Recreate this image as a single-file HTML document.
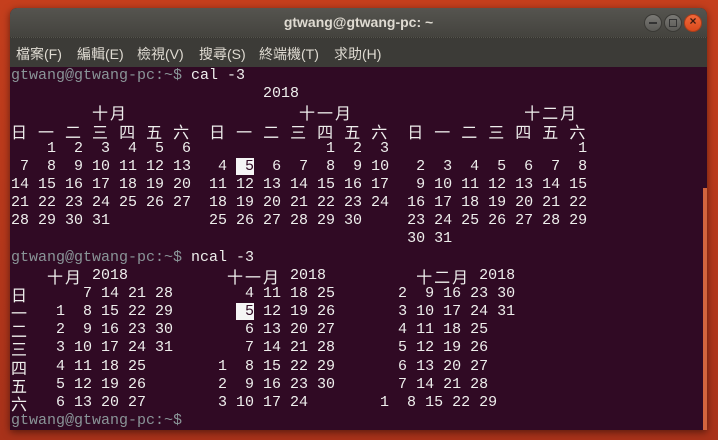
<!DOCTYPE html>
<html><head><meta charset="utf-8"><style>
html,body{margin:0;padding:0;width:718px;height:440px;overflow:hidden;background:linear-gradient(180deg,#c53f1d,#a8321a);}
.win{position:absolute;left:10px;top:8px;width:697px;height:422px;background:#300a24;border-radius:7px 7px 0 0;overflow:hidden;box-shadow:0 2px 8px rgba(0,0,0,.5);}
.tb{position:absolute;left:0;top:0;width:100%;height:29px;background:linear-gradient(180deg,#55544f,#44433e);border-bottom:1px dotted #37362f;}
.title{position:absolute;left:0;width:100%;top:6px;text-align:center;color:#dfdbd2;font:bold 14px "Liberation Sans",sans-serif;}
.mb{position:absolute;left:0;top:30px;width:100%;height:29px;background:#3c3b37;}
.mi{position:absolute;top:6px;color:#dfdbd2;font:14px "Liberation Sans","Noto Sans CJK TC",sans-serif;}
.btn{position:absolute;top:6px;width:16px;height:16px;border-radius:50%;background:linear-gradient(#7a7975,#5a5955);border:1px solid #3a3935;}
.term{position:absolute;left:1px;top:59px;}
.l{position:absolute;left:0;white-space:pre;font:15px "Liberation Mono",monospace;color:#eeeeec;height:18px;line-height:18px;}
.p{color:#8a9598;}
.w{display:inline-block;width:18px;font:16px "Noto Sans CJK TC",sans-serif;vertical-align:top;line-height:18px;height:18px;}
.h{background:#f5f5f5;color:#300a24;}
</style></head><body>
<div class="win">
<div class="tb"><div class="title">gtwang@gtwang-pc: ~</div>
<div class="btn" style="left:634px"><div style="position:absolute;left:4px;top:7px;width:8px;height:2px;background:#333"></div></div>
<div class="btn" style="left:654px"><div style="position:absolute;left:4px;top:4px;width:6px;height:6px;border:1px solid #333"></div></div>
<div class="btn" style="left:674px;background:linear-gradient(#f0683a,#d9491c);border-color:#a83c1a"><div style="position:absolute;left:3px;top:-1px;width:10px;text-align:center;font:bold 12px 'Liberation Sans';color:#3a1a10">×</div></div>
</div>
<div class="mb">
<span class="mi" style="left:6px">檔案(F)</span>
<span class="mi" style="left:67px">編輯(E)</span>
<span class="mi" style="left:127px">檢視(V)</span>
<span class="mi" style="left:189px">搜尋(S)</span>
<span class="mi" style="left:249px">終端機(T)</span>
<span class="mi" style="left:324px">求助(H)</span>
</div>
<div style="position:absolute;left:693px;top:180px;width:4px;height:242px;background:#d2643e"></div>
<div class="term">
<div class="l" style="top:0px"><span class="p">gtwang@gtwang-pc:~$</span> cal -3</div>
<div class="l" style="top:18.2px">                            2018</div>
<div class="l" style="top:36.3px">         <span class="w">十</span><span class="w">月</span>                   <span class="w">十</span><span class="w">一</span><span class="w">月</span>                   <span class="w">十</span><span class="w">二</span><span class="w">月</span></div>
<div class="l" style="top:54.5px"><span class="w">日</span> <span class="w">一</span> <span class="w">二</span> <span class="w">三</span> <span class="w">四</span> <span class="w">五</span> <span class="w">六</span>  <span class="w">日</span> <span class="w">一</span> <span class="w">二</span> <span class="w">三</span> <span class="w">四</span> <span class="w">五</span> <span class="w">六</span>  <span class="w">日</span> <span class="w">一</span> <span class="w">二</span> <span class="w">三</span> <span class="w">四</span> <span class="w">五</span> <span class="w">六</span></div>
<div class="l" style="top:72.6px">    1  2  3  4  5  6               1  2  3                     1</div>
<div class="l" style="top:90.8px"> 7  8  9 10 11 12 13   4 <span class="h"> 5</span>  6  7  8  9 10   2  3  4  5  6  7  8</div>
<div class="l" style="top:109px">14 15 16 17 18 19 20  11 12 13 14 15 16 17   9 10 11 12 13 14 15</div>
<div class="l" style="top:127.1px">21 22 23 24 25 26 27  18 19 20 21 22 23 24  16 17 18 19 20 21 22</div>
<div class="l" style="top:145.3px">28 29 30 31           25 26 27 28 29 30     23 24 25 26 27 28 29</div>
<div class="l" style="top:163.4px">                                            30 31</div>
<div class="l" style="top:181.6px"><span class="p">gtwang@gtwang-pc:~$</span> ncal -3</div>
<div class="l" style="top:199.8px">    <span class="w">十</span><span class="w">月</span> 2018           <span class="w">十</span><span class="w">一</span><span class="w">月</span> 2018          <span class="w">十</span><span class="w">二</span><span class="w">月</span> 2018</div>
<div class="l" style="top:217.9px"><span class="w">日</span>      7 14 21 28        4 11 18 25       2  9 16 23 30</div>
<div class="l" style="top:236.1px"><span class="w">一</span>   1  8 15 22 29       <span class="h"> 5</span> 12 19 26       3 10 17 24 31</div>
<div class="l" style="top:254.2px"><span class="w">二</span>   2  9 16 23 30        6 13 20 27       4 11 18 25</div>
<div class="l" style="top:272.4px"><span class="w">三</span>   3 10 17 24 31        7 14 21 28       5 12 19 26</div>
<div class="l" style="top:290.5px"><span class="w">四</span>   4 11 18 25        1  8 15 22 29       6 13 20 27</div>
<div class="l" style="top:308.7px"><span class="w">五</span>   5 12 19 26        2  9 16 23 30       7 14 21 28</div>
<div class="l" style="top:326.9px"><span class="w">六</span>   6 13 20 27        3 10 17 24        1  8 15 22 29</div>
<div class="l" style="top:345px"><span class="p">gtwang@gtwang-pc:~$</span></div>
</div>
</div>
</body></html>
